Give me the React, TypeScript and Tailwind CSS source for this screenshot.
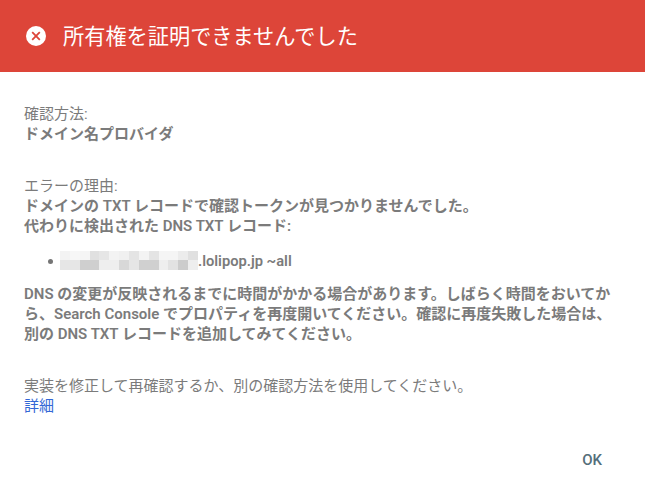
const top = ["#f3f3f3","#f7f7f7","#f5f5f5","#e0e0e0","#e6e6e6","#f3f3f3","#f0f0f0","#e4e4e4","#f3f3f3","#e4e4e4","#f5f5f5","#f5f5f5","#ececec","#e0e0e0"];
const bottom = ["#e6e6e6","#e6e6e6","#cfcfcf","#cfcfcf","#eeeeee","#eeeeee","#d8d8d8","#e6e6e6","#d0d0d0","#d0d0d0","#eeeeee","#e2e2e2","#cccccc","#eeeeee"];

export default function App() {
  return (
    <div className="w-[645px] h-[492px] bg-white overflow-hidden flex flex-col font-['Roboto','Noto_Sans_CJK_JP',sans-serif] text-[15px] leading-[20px] text-[#7b7b7b]">
      <div className="h-[72px] bg-[#dd4539] flex items-center pl-[26px] text-white">
        <svg width="20" height="20" viewBox="0 0 20 20" className="shrink-0">
          <circle cx="10" cy="10" r="10" fill="#fff" />
          <path d="M6.2 6.2 13.8 13.8M13.8 6.2 6.2 13.8" stroke="#dd4539" strokeWidth="1.8" />
        </svg>
        <span className="ml-[17px] text-[21.2px] leading-[28px] pt-[1px]">所有権を証明できませんでした</span>
      </div>
      <div className="flex-1 flex flex-col px-6 pt-[32px]">
        <div>確認方法:</div>
        <div className="font-semibold">ドメイン名プロバイダ</div>
        <div className="mt-[32px]">エラーの理由:</div>
        <div className="font-semibold">ドメインの TXT レコードで確認トークンが見つかりませんでした。</div>
        <div className="font-semibold">代わりに検出された DNS TXT レコード:</div>
        <div className="mt-[15px] flex items-center h-[20px] font-semibold">
          <span className="ml-[24px] w-[5px] h-[5px] rounded-full bg-[#757575]" />
          <span className="ml-[7px] flex flex-col w-[138px] shrink-0 -mt-[1px]">
            <span className="flex h-[9px]">
              {top.map((c, i) => <span key={i} className="w-[10px] h-full" style={{ backgroundColor: c }} />)}
            </span>
            <span className="flex h-[10px]">
              {bottom.map((c, i) => <span key={i} className="w-[10px] h-full" style={{ backgroundColor: c }} />)}
            </span>
          </span>
          <span className="text-[14.7px]">.lolipop.jp ~all</span>
        </div>
        <div className="mt-[13px] font-semibold w-[600px]">
          DNS の変更が反映されるまでに時間がかかる場合があります。しばらく時間をおいてか<br />
          ら、Search Console でプロパティを再度開いてください。確認に再度失敗した場合は、<br />
          別の DNS TXT レコードを追加してみてください。
        </div>
        <div className="mt-[32px]">実装を修正して再確認するか、別の確認方法を使用してください。</div>
        <a className="text-[#3367d6]">詳細</a>
        <div className="flex justify-end mt-[34px] pr-[19px]">
          <span className="font-medium text-[#546e7a]">OK</span>
        </div>
      </div>
    </div>
  );
}
